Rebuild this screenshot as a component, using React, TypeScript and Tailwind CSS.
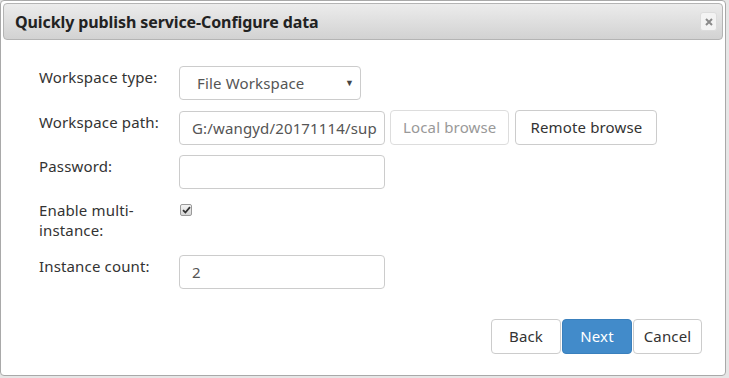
import React from "react";

const font = { fontFamily: '"Noto Sans", "Open Sans", Arial, sans-serif' };

export default function App() {
  return (
    <div className="w-[729px] h-[378px] bg-[#e6e6e6] overflow-hidden relative" style={font}>
      <div className="w-[726px] h-[376px] bg-white border border-[#a9a9a9] rounded-[4px] flex flex-col p-[2px]">
        {/* Title bar */}
        <div className="h-[37px] flex items-center justify-between rounded-[4px] border border-[#b4b4b4] bg-gradient-to-b from-[#ececec] to-[#d2d2d2] pl-[11px] pr-[5px]">
          <span className="text-[16px] font-bold text-[#222] tracking-[-0.1px]">Quickly publish service-Configure data</span>
          <div className="w-[17px] h-[19px] rounded-[3px] border border-[#dcdcdc] bg-[#f3f3f3] flex items-center justify-center">
            <svg width="8" height="8" viewBox="0 0 8 8">
              <path d="M1 1 L7 7 M7 1 L1 7" stroke="#8a8a8a" strokeWidth="2" />
            </svg>
          </div>
        </div>

        {/* Form */}
        <div className="flex flex-col pl-[36px] pt-[26px] text-[15px] text-[#333] tracking-[0.15px]">
          <div className="flex">
            <div className="w-[140px] leading-[20px] pt-[1px]">Workspace type:</div>
            <div className="w-[182px] h-[34px] border border-[#cccccc] rounded-[4px] flex items-center justify-between pl-[17px] pr-[6px] text-[#555]">
              <span>File Workspace</span>
              <span className="text-[9px] text-[#444]">▼</span>
            </div>
          </div>

          <div className="flex mt-[11px]">
            <div className="w-[140px] leading-[20px] pt-[1px]">Workspace path:</div>
            <div className="w-[206px] h-[34px] border border-[#cccccc] rounded-[4px] pl-[12px] pr-[2px] text-[#555]">
              <div className="h-full flex items-center overflow-hidden whitespace-nowrap">G:/wangyd/20171114/sup</div>
            </div>
            <div className="ml-[5px] -mt-[1px] h-[35px] px-[12px] border border-[#dddddd] rounded-[4px] flex items-center text-[#999]">
              Local browse
            </div>
            <div className="ml-[6px] -mt-[1px] h-[35px] px-[14px] border border-[#cccccc] rounded-[4px] flex items-center text-[#333]">
              Remote browse
            </div>
          </div>

          <div className="flex mt-[10px]">
            <div className="w-[140px] leading-[20px] pt-[1px]">Password:</div>
            <div className="w-[206px] h-[34px] border border-[#cccccc] rounded-[4px]" />
          </div>

          <div className="flex mt-[10px]">
            <div className="w-[140px] leading-[20px] pt-[1px]">
              Enable multi-
              <br />
              instance:
            </div>
            <div className="pt-[5px] pl-[1px]">
              <div className="w-[12px] h-[12px] rounded-[2px] border border-[#9a9a9a] bg-gradient-to-b from-[#f4f4f4] to-[#d6d6d6] flex items-center justify-center">
                <svg width="9" height="8" viewBox="0 0 9 8">
                  <path d="M1 4.2 L3.4 6.5 L8 1.2" stroke="#333" strokeWidth="1.8" fill="none" />
                </svg>
              </div>
            </div>
          </div>

          <div className="flex mt-[15px]">
            <div className="w-[140px] leading-[20px] pt-[1px]">Instance count:</div>
            <div className="w-[206px] h-[34px] border border-[#cccccc] rounded-[4px] flex items-center pl-[12px] text-[#555]">
              2
            </div>
          </div>

          <div className="flex justify-end mt-[30px] pr-[21px] gap-[1px]">
            <div className="w-[70px] h-[35px] border border-[#cccccc] rounded-[4px] flex items-center justify-center text-[#333]">Back</div>
            <div className="w-[70px] h-[35px] border border-[#3a80bd] bg-[#428bca] rounded-[4px] flex items-center justify-center text-white">Next</div>
            <div className="w-[69px] h-[35px] border border-[#cccccc] rounded-[4px] flex items-center justify-center text-[#333]">Cancel</div>
          </div>
        </div>
      </div>
    </div>
  );
}
